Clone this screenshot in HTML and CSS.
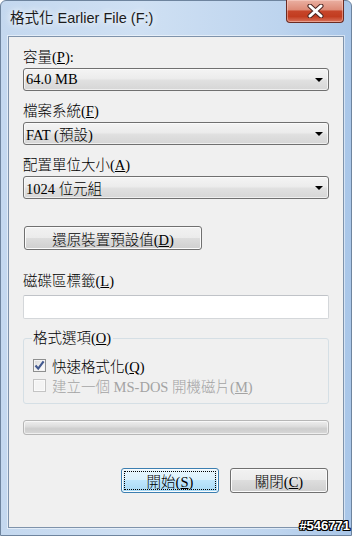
FILE: index.html
```html
<!DOCTYPE html>
<html lang="zh-Hant">
<head>
  <meta charset="UTF-8" />
  <title>格式化 Earlier File (F:)</title>
  <link rel="stylesheet" href="styles.css">
</head>
<body>
  <div class="window">
    <!-- Title bar -->
    <div class="titlebar">
      <span class="title">格式化 Earlier File (F:)</span>
      <button class="close-btn">
        <svg width="17" height="14" viewBox="0 0 17 14">
          <path d="M3 2 L14 12 M14 2 L3 12" stroke="#4b2420" stroke-width="5" stroke-linecap="round"/>
          <path d="M3 2 L14 12 M14 2 L3 12" stroke="#fff" stroke-width="3" stroke-linecap="round"/>
        </svg>
      </button>
    </div>

    <!-- Dialog body -->
    <div class="client">
      <div class="field">
        <div class="label">容量(<u>P</u>):</div>
        <div class="combo"><span>64.0 MB</span><span class="arrow"></span></div>
      </div>
      <div class="field">
        <div class="label">檔案系統(<u>F</u>)</div>
        <div class="combo"><span>FAT (預設)</span><span class="arrow"></span></div>
      </div>
      <div class="field">
        <div class="label">配置單位大小(<u>A</u>)</div>
        <div class="combo"><span>1024 位元組</span><span class="arrow"></span></div>
      </div>

      <button class="btn btn-reset">還原裝置預設值(<u>D</u>)</button>

      <div class="label label-volume">磁碟區標籤(<u>L</u>)</div>
      <div class="textbox"></div>

      <fieldset class="group">
        <legend>格式選項(<u>O</u>)</legend>
        <div class="check-row">
          <span class="checkbox">
            <svg width="11" height="11" viewBox="0 0 11 11">
              <path d="M1.5 5.5 L4.2 8.6 L9.6 1.4" fill="none" stroke="#42598f" stroke-width="2.2"/>
            </svg>
          </span>
          <span>快速格式化(<u>Q</u>)</span>
        </div>
        <div class="check-row disabled">
          <span class="checkbox"></span>
          <span>建立一個 MS-DOS 開機磁片(<u>M</u>)</span>
        </div>
      </fieldset>

      <div class="progress"></div>

      <div class="actions">
        <button class="btn btn-default">開始(<u>S</u>)</button>
        <button class="btn">關閉(<u>C</u>)</button>
      </div>
    </div>

    <div class="watermark">#546771</div>
  </div>
</body>
</html>
```

FILE: styles.css
```css
* {
  box-sizing: border-box;
}

body {
  margin: 0;
  width: 352px;
  height: 536px;
  overflow: hidden;
  font-family: "Liberation Serif", "Noto Sans CJK TC", serif;
  font-size: 14.5px;
  font-weight: 300;
  color: #000;
}

/* Window frame */
.window {
  position: relative;
  height: 536px;
  display: flex;
  flex-direction: column;
  padding: 0 7px 7px;
  border: 1px solid #6e849e;
  border-radius: 6px 6px 0 0;
  background: linear-gradient(90deg, #c4d8ef 0%, #cfe0f3 40%, #bdd4ee 80%, #a9c6e8 100%);
}

.titlebar {
  height: 35px;
  display: flex;
  justify-content: space-between;
  align-items: flex-start;
}

.title {
  margin: 7px 0 0 2px;
  line-height: 20px;
  font-family: "Liberation Sans", "Noto Sans CJK TC", sans-serif;
  font-size: 14.5px;
  font-weight: 400;
  color: #1c1c1c;
  text-shadow: 0 0 6px rgba(255, 255, 255, 0.9), 0 0 10px rgba(255, 255, 255, 0.8);
}

.close-btn {
  margin-top: -1px;
  width: 58px;
  height: 23px;
  padding: 0;
  border: 1px solid #6b2b22;
  border-top: none;
  border-radius: 0 0 4px 4px;
  background: linear-gradient(#eab0a2 0%, #dd8a76 45%, #c7452a 50%, #c23c20 75%, #d9735c 100%);
  box-shadow: inset 0 0 0 1px rgba(255, 220, 210, 0.45);
  display: flex;
  justify-content: center;
  align-items: center;
}

/* Dialog body */
.client {
  flex: 1;
  display: flex;
  flex-direction: column;
  padding: 12px 14px 0;
  background: #f0f0f0;
  border: 1px solid #7f93ab;
  box-shadow: 0 0 0 1px rgba(255, 255, 255, 0.5);
}

.label {
  height: 16px;
  line-height: 16px;
  white-space: nowrap;
}

.field + .field {
  margin-top: 12px;
}

.combo {
  margin-top: 3px;
  height: 23px;
  padding: 0 5px 0 2px;
  display: flex;
  justify-content: space-between;
  align-items: center;
  border: 1px solid #707070;
  border-radius: 3px;
  background: linear-gradient(#f4f4f4 0%, #ececec 45%, #e0e0e0 55%, #d6d6d6 100%);
  box-shadow: inset 0 0 0 1px rgba(255, 255, 255, 0.6);
}

.arrow {
  width: 0;
  height: 0;
  border-left: 4px solid transparent;
  border-right: 4px solid transparent;
  border-top: 4px solid #000;
}

.btn {
  height: 24px;
  padding: 0;
  font: inherit;
  color: #000;
  border: 1px solid #707070;
  border-radius: 3px;
  background: linear-gradient(#f2f2f2 0%, #ebebeb 50%, #dddddd 50%, #cfcfcf 100%);
  box-shadow: inset 0 0 0 1px #fbfbfb;
}

.btn-reset {
  margin: 27px 0 0 1px;
  width: 178px;
  align-self: flex-start;
}

.label-volume {
  margin-top: 23px;
}

.textbox {
  margin-top: 6px;
  height: 24px;
  background: #fff;
  border: 1px solid #d4d7da;
  border-top-color: #c0c3c8;
  border-radius: 2px;
}

/* Format options group */
.group {
  margin: 11px 0 0;
  padding: 9px 8px 8px;
  min-width: 0;
  border: 1px solid #d5dfe5;
  border-radius: 3px;
}

.group legend {
  padding: 0 2px 0 1px;
  line-height: 16px;
}

.check-row {
  height: 20px;
  display: flex;
  align-items: center;
  gap: 6px;
  padding-left: 1px;
  white-space: nowrap;
}

.checkbox {
  width: 13px;
  height: 13px;
  display: flex;
  justify-content: center;
  align-items: center;
  border: 1px solid #8e8f8f;
  background: linear-gradient(135deg, #d8d8d8 0%, #f3f3f3 60%, #ffffff 100%);
  box-shadow: inset 0 0 0 1px #f4f4f4;
}

.check-row.disabled {
  color: #a3a3a3;
}

.check-row.disabled .checkbox {
  border-color: #c4c4c4;
  background: #f4f4f4;
  box-shadow: inset 0 0 0 1px #fafafa;
}

.progress {
  margin-top: 16px;
  height: 15px;
  border: 1px solid #b6b6b6;
  border-radius: 3px;
  background: linear-gradient(#eeeeee 0%, #dedede 40%, #cdcdcd 60%, #d9d9d9 100%);
  box-shadow: inset 0 0 0 1px rgba(255, 255, 255, 0.6);
}

.actions {
  margin-top: 33px;
  padding-right: 1px;
  display: flex;
  justify-content: flex-end;
  gap: 11px;
}

.actions .btn {
  width: 98px;
  height: 25px;
}

.btn-default {
  border-color: #3c7fb1;
  background: linear-gradient(#eaf6fd 0%, #d9f0fc 50%, #bee6fd 50%, #a7d9f5 100%);
  outline: 1px dotted #000;
  outline-offset: -4px;
}

.watermark {
  position: absolute;
  right: 1px;
  bottom: 2px;
  font-family: "Liberation Sans", sans-serif;
  font-weight: bold;
  font-size: 13px;
  color: #fff;
  text-shadow: 1px 0 #000, -1px 0 #000, 0 1px #000, 0 -1px #000,
    1px 1px #000, -1px -1px #000, 1px -1px #000, -1px 1px #000;
}
```
